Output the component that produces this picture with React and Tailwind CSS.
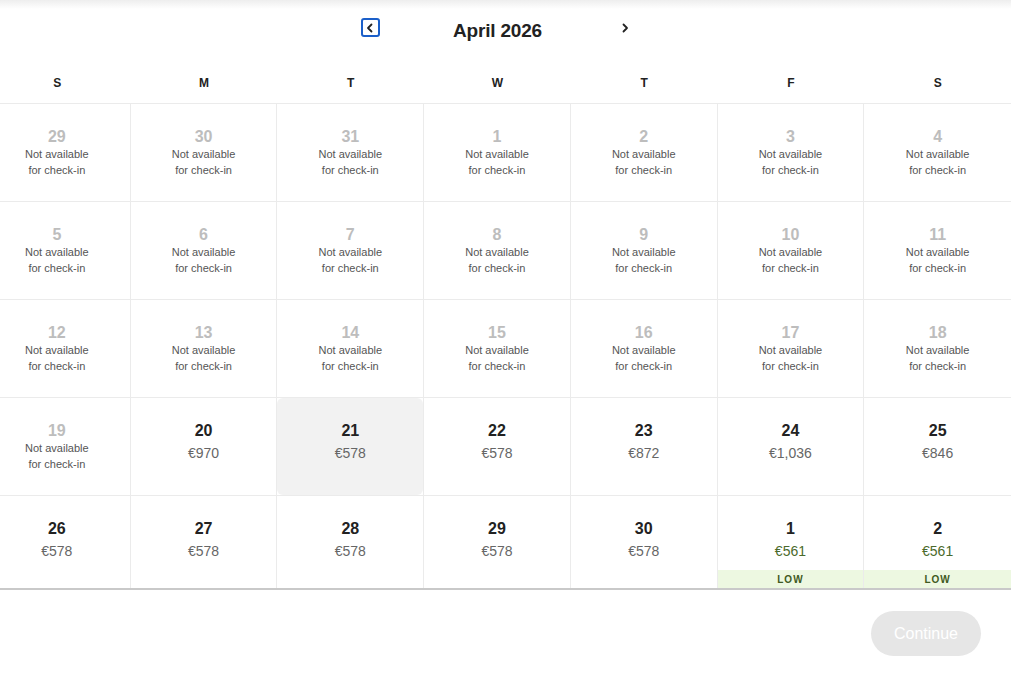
import React from "react";

const rows = [
  [29, 30, 31, 1, 2, 3, 4].map((d) => ({ d, off: true })),
  [5, 6, 7, 8, 9, 10, 11].map((d) => ({ d, off: true })),
  [12, 13, 14, 15, 16, 17, 18].map((d) => ({ d, off: true })),
  [
    { d: 19, off: true },
    { d: 20, p: "€970" },
    { d: 21, p: "€578", sel: true },
    { d: 22, p: "€578" },
    { d: 23, p: "€872" },
    { d: 24, p: "€1,036" },
    { d: 25, p: "€846" },
  ],
  [
    { d: 26, p: "€578" },
    { d: 27, p: "€578" },
    { d: 28, p: "€578" },
    { d: 29, p: "€578" },
    { d: 30, p: "€578" },
    { d: 1, p: "€561", low: true },
    { d: 2, p: "€561", low: true },
  ],
];

const days = ["S", "M", "T", "W", "T", "F", "S"];

function Cell({ c, last }) {
  return (
    <div className={`flex ${last ? "" : "border-r border-[#ebebeb]"}`}>
      <div
        className={`flex-1 flex flex-col items-center ${c.sel ? "bg-[#f2f2f2] rounded-md" : ""}`}
      >
        <div
          className={`pt-[24px] text-[16px] leading-[18px] font-semibold ${
            c.off ? "text-[#bdbdbd]" : "text-[#222222]"
          }`}
        >
          {c.d}
        </div>
        {c.off ? (
          <div className="text-[11px] leading-[16px] text-[#555555] text-center">
            <div>Not available</div>
            <div>for check-in</div>
          </div>
        ) : (
          <div
            className={`mt-[3px] text-[14px] leading-[20px] ${
              c.low ? "text-[#4b6a2b]" : "text-[#666666]"
            }`}
          >
            {c.p}
          </div>
        )}
        {c.low && (
          <div className="mt-auto w-full h-[18px] bg-[#edf8e1] flex items-center justify-center text-[10px] font-bold tracking-[0.1em] text-[#3f5a22]">
            LOW
          </div>
        )}
      </div>
    </div>
  );
}

export default function App() {
  return (
    <div
      className="w-[1011px] h-[673px] bg-white overflow-hidden relative"
      style={{ fontFamily: '"Liberation Sans", Arial, sans-serif' }}
    >
      <div className="absolute top-0 left-0 right-0 h-[9px] bg-gradient-to-b from-[#eeeeee] to-white" />
      <div className="ml-[-16px] w-[1027px] relative">
        <div className="h-[63px] flex items-center justify-center">
          <div className="flex items-center">
            <button className="w-[19px] h-[19px] mt-[-8px] border-2 border-[#1b5fc9] rounded-[3px] flex items-center justify-center">
              <svg width="10" height="10" viewBox="0 0 10 10" fill="none">
                <path d="M6.5 1.5 L3 5 L6.5 8.5" stroke="#222" strokeWidth="1.8" strokeLinecap="round" strokeLinejoin="round" />
              </svg>
            </button>
            <div className="w-[236px] text-center text-[19px] font-semibold text-[#222222] tracking-[-0.01em]">
              April 2026
            </div>
            <button className="w-[19px] h-[19px] mt-[-8px] flex items-center justify-center">
              <svg width="10" height="10" viewBox="0 0 10 10" fill="none">
                <path d="M3.5 1.5 L7 5 L3.5 8.5" stroke="#222" strokeWidth="1.8" strokeLinecap="round" strokeLinejoin="round" />
              </svg>
            </button>
          </div>
        </div>
        <div className="grid grid-cols-7 h-[41px] border-b border-[#ebebeb]">
          {days.map((d, i) => (
            <div key={i} className="flex items-center justify-center text-[12px] font-semibold text-[#222222]">
              {d}
            </div>
          ))}
        </div>
        {rows.map((r, ri) => {
          const isLastRow = ri === rows.length - 1;
          return (
            <div
              key={ri}
              className={`grid grid-cols-7 ${isLastRow ? "h-[92px]" : "h-[98px] border-b border-[#ebebeb]"}`}
            >
              {r.map((c, ci) => (
                <Cell key={ci} c={c} last={ci === 6} />
              ))}
            </div>
          );
        })}
      </div>
      <div className="h-[2px] bg-[#c9c9c9]" />
      <div className="flex justify-end pr-[30px] pt-[21px]">
        <button className="w-[110px] h-[45px] rounded-full bg-[#e6e6e6] text-white text-[16px]">
          Continue
        </button>
      </div>
    </div>
  );
}
